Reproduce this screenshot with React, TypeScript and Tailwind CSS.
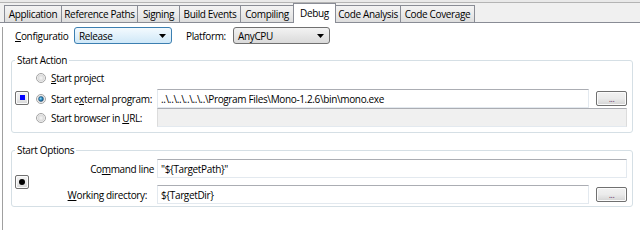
import React from "react";

type TabDef = { label: string; w: string; selected?: boolean };

const tabs: TabDef[] = [
  { label: "Application", w: "w-[58px]" },
  { label: "Reference Paths", w: "w-[77px]" },
  { label: "Signing", w: "w-[43px]" },
  { label: "Build Events", w: "w-[62px]" },
  { label: "Compiling", w: "w-[54px]" },
  { label: "Debug", w: "w-[43px]", selected: true },
  { label: "Code Analysis", w: "w-[66px]" },
  { label: "Code Coverage", w: "w-[75px]" },
];

function Tab({ t, first }: { t: TabDef; first: boolean }) {
  if (t.selected) {
    return (
      <div
        className={`${t.w} ${first ? "" : "-ml-px"} relative z-10 h-[20px] mb-[-1px] border-t border-l border-r border-[#898c95] bg-white flex justify-center pt-[3px] whitespace-nowrap`}
      >
        {t.label}
      </div>
    );
  }
  return (
    <div
      className={`${t.w} ${first ? "" : "-ml-px"} h-[17px] border-t border-l border-r border-[#898c95] bg-linear-to-b from-[#f3f3f3] via-[#ebebeb] to-[#dddddd] flex items-center justify-center whitespace-nowrap`}
    >
      {t.label}
    </div>
  );
}

function Arrow() {
  return (
    <svg width="7" height="4" viewBox="0 0 7 4" className="shrink-0">
      <polygon points="0,0 7,0 3.5,4" fill="#000" />
    </svg>
  );
}

function Radio({ checked }: { checked?: boolean }) {
  return (
    <svg width="10" height="10" viewBox="0 0 10 10" className="shrink-0">
      <defs>
        <radialGradient id={checked ? "rg1" : "rg0"} cx="0.5" cy="0.5" r="0.6">
          <stop offset="0" stopColor="#f6f6f6" />
          <stop offset="1" stopColor="#cfcfcf" />
        </radialGradient>
        <radialGradient id="dot" cx="0.4" cy="0.4" r="0.7">
          <stop offset="0" stopColor="#8fd6f5" />
          <stop offset="0.5" stopColor="#2a8cc4" />
          <stop offset="1" stopColor="#0f3e66" />
        </radialGradient>
      </defs>
      <circle cx="5" cy="5" r="4.5" fill="#fafafa" stroke="#a2a2a2" strokeWidth="1" />
      <circle cx="5" cy="5" r="3.4" fill={checked ? "url(#rg1)" : "url(#rg0)"} />
      {checked && <circle cx="5" cy="5" r="2.4" fill="url(#dot)" stroke="#1d4c72" strokeWidth="0.6" />}
    </svg>
  );
}

function SmallBtn({ kind }: { kind: "blue" | "black" }) {
  return (
    <div className="w-[14px] h-[14px] border border-[#707070] rounded-[2px] bg-linear-to-b from-[#f2f2f2] via-[#ebebeb] to-[#d6d6d6] shadow-[inset_0_0_0_1px_#fbfbfb] flex items-center justify-center">
      {kind === "blue" ? (
        <div className="w-[5px] h-[5px] bg-[#0000ff]" />
      ) : (
        <div className="w-[6px] h-[6px] rounded-full bg-black" />
      )}
    </div>
  );
}

function DotsBtn() {
  return (
    <div className="w-[31px] h-[15px] border border-[#707070] rounded-[2px] bg-linear-to-b from-[#f2f2f2] via-[#ebebeb] to-[#d3d3d3] shadow-[inset_0_0_0_1px_#fbfbfb] flex items-center justify-center text-[9px] leading-[9px] text-[#6b3d6b] tracking-[-0.5px]">
      ...
    </div>
  );
}

function TextBox({ w, text, disabled }: { w: string; text?: string; disabled?: boolean }) {
  return (
    <div
      className={`${w} h-[19px] border border-[#e3e9ef] border-t-[#abadb3] ${disabled ? "bg-[#f0f0f0] border-l-[#dcdcdc] border-r-[#dcdcdc]" : "bg-white"} flex items-center px-[3px] whitespace-nowrap overflow-hidden`}
    >
      {text}
    </div>
  );
}

export default function App() {
  return (
    <div className="w-[640px] h-[230px] overflow-hidden bg-white text-black font-['Open_Sans',sans-serif] text-[10px] leading-[12px] tracking-[-0.35px]">
      <div className="h-[3px] bg-[#e9e9e9] border-b border-[#b4b4b4]" />
      <div className="h-[20px] bg-[#f0f0f0] border-b border-[#898c95] flex items-end pl-[4px]">
        {tabs.map((t, i) => (
          <Tab key={t.label} t={t} first={i === 0} />
        ))}
      </div>
      <div className="ml-[2px] h-[207px] border-l border-[#a0a0a0]">
        {/* Configuration row */}
        <div className="mt-[4px] h-[17px] flex items-center">
          <div className="ml-[12px] w-[54px] whitespace-nowrap">
            <span className="underline underline-offset-1">C</span>onfiguratio
          </div>
          <div className="ml-[5px] w-[98px] h-[17px] border border-[#3c7fb1] rounded-[3px] bg-linear-to-b from-[#f4fafe] to-[#cfe8f8] flex items-center justify-between pl-[4px] pr-[5px]">
            <span>Release</span>
            <Arrow />
          </div>
          <div className="ml-[14px] w-[47px] whitespace-nowrap">Platform:</div>
          <div className="w-[97px] h-[17px] border border-[#707070] rounded-[3px] bg-linear-to-b from-[#f3f3f3] to-[#dadada] flex items-center justify-between pl-[4px] pr-[5px]">
            <span>AnyCPU</span>
            <Arrow />
          </div>
        </div>

        {/* Start Action */}
        <fieldset className="mt-[10px] ml-[8px] w-[622px] border border-[#d5dfe5] rounded-[3px] pl-[3px] pr-[5px] pb-[5px]">
          <legend className="px-[2px] leading-[12px]">Start Action</legend>
          <div className="pt-[2px] flex">
            <div className="w-[14px] flex items-center">
              <SmallBtn kind="blue" />
            </div>
            <div className="ml-[7px] flex flex-col">
              <div className="h-[19px] flex items-center gap-[5px]">
                <Radio />
                <span>
                  <span className="underline underline-offset-1">S</span>tart project
                </span>
              </div>
              <div className="mt-[2px] h-[19px] flex items-center">
                <div className="w-[121px] flex items-center gap-[5px] whitespace-nowrap">
                  <Radio checked />
                  <span>
                    Start e<span className="underline underline-offset-1">x</span>ternal program:
                  </span>
                </div>
                <TextBox w="w-[432px]" text={"..\\..\\..\\..\\..\\..\\Program Files\\Mono-1.2.6\\bin\\mono.exe"} />
                <div className="ml-[7px]">
                  <DotsBtn />
                </div>
              </div>
              <div className="h-[19px] flex items-center">
                <div className="w-[121px] flex items-center gap-[5px] whitespace-nowrap">
                  <Radio />
                  <span>
                    Start browser in <span className="underline underline-offset-1">U</span>RL:
                  </span>
                </div>
                <TextBox w="w-[470px]" disabled />
              </div>
            </div>
          </div>
        </fieldset>

        {/* Start Options */}
        <fieldset className="mt-[11px] ml-[8px] w-[622px] border border-[#d5dfe5] rounded-[3px] pl-[3px] pr-[5px] pb-[2px]">
          <legend className="px-[2px] leading-[12px]">Start Options</legend>
          <div className="pt-[3px] flex">
            <div className="w-[14px] flex items-center">
              <SmallBtn kind="black" />
            </div>
            <div className="flex flex-col">
              <div className="h-[19px] flex items-center">
                <div className="w-[128px] text-right pr-[3px] whitespace-nowrap">
                  Co<span className="underline underline-offset-1">m</span>mand line
                </div>
                <TextBox w="w-[470px]" text={'"${TargetPath}"'} />
              </div>
              <div className="mt-[7px] h-[19px] flex items-center">
                <div className="w-[128px] text-right pr-[10px] whitespace-nowrap">
                  <span className="underline underline-offset-1">W</span>orking directory:
                </div>
                <TextBox w="w-[432px]" text={"${TargetDir}"} />
                <div className="ml-[7px]">
                  <DotsBtn />
                </div>
              </div>
            </div>
          </div>
        </fieldset>
      </div>
    </div>
  );
}
